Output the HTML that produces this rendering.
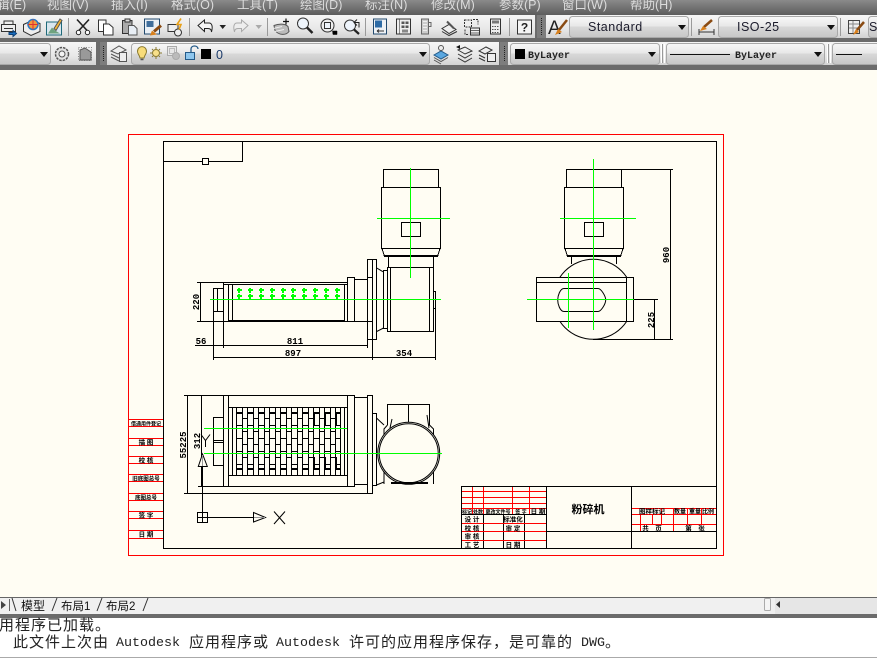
<!DOCTYPE html>
<html><head><meta charset="utf-8"><style>
html,body{margin:0;padding:0;background:#fffdf3;width:877px;height:670px;overflow:hidden}
svg{display:block;position:absolute;left:0;top:0}
.c{font-family:"Liberation Sans","Noto Sans CJK SC",sans-serif}
</style></head><body>
<svg width="877" height="670" viewBox="0 0 877 670" xmlns="http://www.w3.org/2000/svg" class="c">
<defs>
<linearGradient id="mb" x1="0" y1="0" x2="0" y2="1"><stop offset="0" stop-color="#8a8a8a"/><stop offset="1" stop-color="#5c5c5c"/></linearGradient>
<linearGradient id="tb" x1="0" y1="0" x2="0" y2="1"><stop offset="0" stop-color="#f6f6f6"/><stop offset=".6" stop-color="#e8e8e8"/><stop offset="1" stop-color="#d2d2d2"/></linearGradient>
<linearGradient id="cb" x1="0" y1="0" x2="0" y2="1"><stop offset="0" stop-color="#f8f8f8"/><stop offset=".45" stop-color="#e8e8e8"/><stop offset=".5" stop-color="#d8d8d8"/><stop offset="1" stop-color="#c6c6c6"/></linearGradient>
</defs>

<!-- canvas -->
<rect width="877" height="670" fill="#fffdf3"/>

<!-- drawing -->
<g shape-rendering="crispEdges" fill="none" stroke="#f00" stroke-width="1">
<rect x="128.5" y="134.5" width="595" height="421"/>
<path d="M129 419.5H163M129 426.5H163M129 438.5H163M129 445.5H163M129 456.5H163M129 463.5H163M129 474.5H163M129 481.5H163M129 493.5H163M129 500.5H163M129 511.5H163M129 518.5H163M129 530.5H163M129 538.5H163"/>
</g>
<g fill="#000" font-size="6.5" font-weight="700" text-anchor="middle">
<text x="146" y="425.5" font-size="5">借通用件登记</text><text x="146" y="444.5">描 图</text><text x="146" y="462.5">校 核</text><text x="146" y="480.5" font-size="5.5">旧底图总号</text><text x="146" y="499.5" font-size="5.5">底图总号</text><text x="146" y="517.5">签 字</text><text x="146" y="536.5">日 期</text>
</g>
<g shape-rendering="crispEdges" fill="none" stroke="#000" stroke-width="1">
<rect x="163.5" y="141.5" width="553" height="407"/>
<path d="M163 161.5H243M242.5 141V162"/>
<rect x="202.5" y="158.5" width="6" height="6" fill="#fffdf3"/>
<!-- title block black -->
<rect x="461.5" y="486.5" width="255" height="62"/>
<path d="M546.5 486V548M631.5 486V548M547 531.5H717M483.5 514V548M503.5 514V548M524.5 514V548M462 514.5H546"/>
</g>
<g shape-rendering="crispEdges" fill="none" stroke="#f00" stroke-width="1">
<path d="M462 491.5H546M462 497.5H546M462 503.5H546M462 508.5H546M462 523.5H546M462 531.5H546M462 540.5H546M472.5 487V514M483.5 487V514M512.5 487V514M529.5 487V514M632 508.5H716M632 514.5H716M632 524.5H716M640.5 514V531M652.5 514V525M661.5 509V525M673.5 509V531M687.5 509V525M701.5 509V525"/>
</g>
<g fill="#000" font-size="6.5" font-weight="700" text-anchor="middle">
<text x="467" y="513.5" font-size="5">标记</text><text x="478" y="513.5" font-size="5">处数</text><text x="498" y="513.5" font-size="5">更改文件号</text><text x="521" y="513.5" font-size="5">签 字</text><text x="538" y="513.5">日 期</text>
<text x="472" y="521.5">设 计</text><text x="513" y="521.5">标准化</text><text x="472" y="530.5">校 核</text><text x="513" y="530.5">审 定</text><text x="472" y="538.5">审 核</text><text x="472" y="547">工 艺</text><text x="513" y="547">日 期</text>
<text x="652" y="513.5">图样标记</text><text x="680" y="513.5" font-size="6">数量</text><text x="695" y="513.5" font-size="6">重量</text><text x="708" y="513.5" font-size="6">比例</text><text x="652" y="530.5">共　页</text><text x="695" y="530.5">第　张</text>
<text x="588" y="513" font-size="11">粉碎机</text>
</g>

<!-- Left (front) view -->
<g shape-rendering="crispEdges" fill="none" stroke="#000" stroke-width="1">
<rect x="383.5" y="169.5" width="55" height="18"/>
<rect x="381.5" y="187.5" width="59" height="61"/>
<rect x="401.5" y="222.5" width="19" height="14"/>
<path d="M382 248.5L384.5 256.5H437.5L440 248.5M384 255.5H438" />
<rect x="388.5" y="256.5" width="45" height="11"/>
<rect x="387.5" y="267.5" width="46" height="64"/>
<path d="M390.5 267V332M429.5 267V332"/>
<rect x="433.5" y="291.5" width="2" height="17"/>
<rect x="367.5" y="259.5" width="9" height="80"/>
<path d="M372.5 259V340M367 277.5H373M367 321.5H373"/>
<rect x="383.5" y="270.5" width="4" height="58"/>
<path d="M354.5 279.5H367M354.5 321.5H367"/>
<rect x="347.5" y="277.5" width="7" height="44"/>
<rect x="223.5" y="282.5" width="124" height="39"/>
<path d="M223 284.5H348M228.5 284V322M232.5 284V321M344.5 284V321"/>
<rect x="228" y="320" width="116" height="1.5" fill="#000" stroke="none"/>
<rect x="213.5" y="288.5" width="10" height="33"/>
<path d="M213 311.5H223M217.5 288V312"/>
<!-- dims -->
<path d="M200.5 282V322M197 282.5H224M197 321.5H224"/>
<path d="M195 345.5H367M213 357.5H436M213.5 288V360M223.5 321V348M367.5 339V348M372.5 339V360M435.5 300V360"/>
</g>
<g fill="none" stroke="#000" stroke-width="1">
<path d="M376.7 268L383.5 272M376.7 331.5L383.5 328"/>
</g>
<g fill="#000" font-family="Liberation Mono" font-size="9" font-weight="700" text-anchor="middle">
<text x="201" y="344">56</text><text x="295" y="344">811</text><text x="293" y="356">897</text><text x="404" y="356">354</text>
<text transform="translate(199,302) rotate(-90)">220</text>
<text transform="translate(669,255) rotate(-90)">960</text>
<text transform="translate(654,320) rotate(-90)">225</text>
<text transform="translate(186,445) rotate(-90)">55225</text>
<text transform="translate(200,441) rotate(-90)">312</text>
</g>
<g shape-rendering="crispEdges" stroke="#0f0" stroke-width="1" fill="none">
<path d="M410.5 168V278M377 218.5H450M210 299.5H441"/>
</g>
<g shape-rendering="crispEdges" stroke="#0f0" stroke-width="2" fill="none">
<path d="M237 290h5M239 288v5M248 290h5M250 288v5M259 290h5M261 288v5M270 290h5M272 288v5M281 290h5M283 288v5M291 290h5M293 288v5M302 290h5M304 288v5M313 290h5M315 288v5M324 290h5M326 288v5M335 290h5M337 288v5"/>
<path d="M237 296h5M239 294v5M248 296h5M250 294v5M259 296h5M261 294v5M270 296h5M272 294v5M281 296h5M283 294v5M291 296h5M293 294v5M302 296h5M304 294v5M313 296h5M315 294v5M324 296h5M326 294v5M335 296h5M337 294v5" />
</g>

<!-- Right (side) view -->
<g fill="none" stroke="#000" stroke-width="1">
<circle cx="593.3" cy="299.3" r="40"/>
<rect x="536.5" y="277.5" width="97" height="44" fill="#fffdf3" shape-rendering="crispEdges"/>
<path d="M626.5 277V322M537 282.5H626" shape-rendering="crispEdges"/>
<path d="M564 288.5H598C601 288.5 605.7 296 605.7 300C605.7 304 601 311.5 598 311.5H564C560 311.5 557.7 304 557.7 300C557.7 296 560 288.5 564 288.5Z"/>
<g shape-rendering="crispEdges">
<rect x="566.5" y="169.5" width="55" height="18"/>
<rect x="564.5" y="187.5" width="59" height="61"/>
<rect x="584.5" y="222.5" width="19" height="14"/>
<path d="M565 248.5L567.5 256.5H620.5L623 248.5M567 255.5H621M571.5 256V264M616.5 256V264"/>
<path d="M621 169.5H673M593 339.5H673M670.5 170V339M634 299.5H658M654.5 300V339"/>
</g>
</g>
<g shape-rendering="crispEdges" stroke="#0f0" stroke-width="1" fill="none">
<path d="M593.5 159V330M560 218.5H636M527 299.5H634M568.5 273V328"/>
</g>

<!-- Bottom (plan) view -->
<g shape-rendering="crispEdges" fill="none" stroke="#000" stroke-width="1">
<path d="M184 395.5H354M184 493.5H367M187.5 395V494M201.5 395V487M198 486.5H224"/>
<rect x="223.5" y="395.5" width="5" height="91"/>
<rect x="347.5" y="395.5" width="7" height="91"/>
<path d="M228 486.5H348M228 407.5H348M228 475.5H348"/>
<rect x="213.5" y="417.5" width="10" height="48"/>
<path d="M213 440.5H223M213 442.5H223"/>
<rect x="354.5" y="397.5" width="13" height="87"/>
<rect x="367.5" y="395.5" width="5" height="98"/>
<rect x="372.5" y="413.5" width="4" height="72"/>
<!-- cutters -->
<path d="M232.5 407V475M236.5 407V475M242.5 407V475M247.5 407V475M253.5 407V475M258.5 407V475M264.5 407V475M269.5 407V475M275.5 407V475M280.5 407V475M286.5 407V475M291.5 407V475M297.5 407V475M302.5 407V475M308.5 407V475M313.5 407V475M319.5 407V475M324.5 407V475M330.5 407V475M335.5 407V475M340.5 407V475M344.5 407V475"/>
<path stroke-dasharray="5.5 5.5" d="M242 418.5H341M242 431.5H341M242 444.5H341M242 457.5H341"/>
<path stroke-dasharray="5.5 5.5" d="M236.5 425.5H341M236.5 438.5H341M236.5 451.5H341M236.5 464.5H341"/>
<path stroke-dasharray="5.5 5.5" stroke-width="2" d="M236.5 413H341M236.5 469H341"/>
<path stroke-width="2" d="M314 413V425M325 413V425M336 413V425M314 457V469M325 457V469M336 457V469"/>
</g>
<g fill="none" stroke="#000" stroke-width="1">
<path d="M376.5 418L384 425M376.5 485L384 482M387.5 425V404.5H429.5V425L433.5 429V484M408.5 404V422M387.5 425L384 429V484M392 419L390 428M427 415L429 428"/>
<circle cx="408.7" cy="453.3" r="31" fill="#fffdf3"/>
<circle cx="408.7" cy="453.3" r="29.5"/>
</g>
<rect x="391" y="482" width="37" height="2" fill="#000"/>
<g shape-rendering="crispEdges" stroke="#0f0" stroke-width="1" fill="none">
<path d="M204 428.5H347M204 453.5H442"/>
</g>
<!-- UCS -->
<g fill="none" stroke="#000" stroke-width="1">
<path d="M202.5 466V513M208 517.5H253" shape-rendering="crispEdges"/>
<rect x="197.5" y="512.5" width="10" height="10" shape-rendering="crispEdges"/>
<path d="M202.5 513V522M198 517.5H207" shape-rendering="crispEdges"/>
<path d="M202.5 454L198.3 466.5H207.3Z" fill="#fffdf3"/>
<path d="M202.5 455V466" stroke="#999"/>
<path d="M253.5 512.5L265.5 517.5L253.5 522Z" fill="#fffdf3"/>
<path d="M254 517.5H265" stroke="#999"/>
<path d="M274 511.5L285 524M285 511.5L274 524M201 434.5L205.5 440.5L210 434.5M205.5 440.5V447"/>
</g>

<!-- menu bar -->
<rect x="0" y="0" width="877" height="15" fill="url(#mb)"/>
<g fill="#dcdcdc" font-size="12.5">
<text x="-3" y="9">辑(E)</text><text x="47" y="9">视图(V)</text><text x="111" y="9">插入(I)</text><text x="171" y="9">格式(O)</text><text x="237" y="9">工具(T)</text><text x="300" y="9">绘图(D)</text><text x="365" y="9">标注(N)</text><text x="431" y="9">修改(M)</text><text x="499" y="9">参数(P)</text><text x="562" y="9">窗口(W)</text><text x="630" y="9">帮助(H)</text>
</g>

<!-- toolbar backgrounds -->
<rect x="0" y="15" width="877" height="55" fill="#6b6b6b"/>
<rect x="0" y="15" width="877" height="23" fill="url(#tb)"/>
<rect x="0" y="42" width="96" height="23" fill="url(#tb)"/>
<rect x="107" y="42" width="392" height="23" fill="url(#tb)"/>
<rect x="508" y="42" width="369" height="23" fill="url(#tb)"/>
<rect x="535" y="15" width="2" height="23" fill="#6b6b6b"/>
<rect x="537" y="15" width="9" height="23" fill="#7d7d7d"/>
<rect x="100" y="42" width="7" height="23" fill="#7d7d7d"/>
<rect x="500" y="42" width="8" height="23" fill="#7d7d7d"/>
<g fill="none" stroke="#222" stroke-dasharray="1 1" shape-rendering="crispEdges">
<path d="M541.5 18V36M103.5 46V62M504.5 46V62"/>
</g>
<!-- separators -->
<g stroke="#9a9a9a" shape-rendering="crispEdges"><path d="M68.5 18V36M189.5 18V36M267.5 18V36M365.5 18V36M509.5 18V36M691.5 18V36M840.5 18V36"/></g>
<g stroke="#fff" shape-rendering="crispEdges"><path d="M661.5 44V63M664.5 44V63M827.5 44V63M830.5 44V63"/></g>
<g stroke="#999" shape-rendering="crispEdges"><path d="M662.5 44V63M828.5 44V63"/></g>

<!-- row 1 icons -->
<g fill="none" stroke="#333" stroke-width="1" transform="translate(0,-1.5)">
<path d="M4 22.5H13V26H15.5V33H1.5V26H4Z" fill="#eee"/><path d="M4 26H13M4 30H13"/><path d="M9 34H13V32L16.5 35L13 38V36H9Z" fill="#1b6fc0" stroke="#0c3f75"/>
<path d="M23.5 26L32 22L40 25V33L31 37L23.5 33Z" fill="#eee"/><circle cx="33" cy="26" r="5" fill="#f29a3c" stroke="#2b79c5" stroke-width="1.5"/><path d="M33 21V31M28 26H38" stroke="#d33"/>
<rect x="46.5" y="23.5" width="15" height="13" fill="#d8e6ee" stroke="#1f6a7a"/><path d="M48 35L52 29L55 32L60 35Z" fill="#6fa37f" stroke="none"/><path d="M54 30L60 20.5L62 22L56 32Z" fill="#f3b638" stroke="#555"/>
<path d="M77 21L88 33M89 21L78 33" stroke="#222" stroke-width="1.6"/><circle cx="78.5" cy="34" r="2.2" fill="#fff" stroke="#222"/><circle cx="87.5" cy="34" r="2.2" fill="#fff" stroke="#222"/>
<path d="M98.5 21.5H106V33H98.5Z" fill="#fff"/><path d="M103.5 25.5H109L113 29V36.5H103.5Z" fill="#fff"/>
<path d="M122.5 22H132V35H122.5Z" fill="#aaa"/><rect x="125" y="20.5" width="5" height="3" fill="#ddd"/><path d="M128.5 27H134L137 30V36.5H128.5Z" fill="#e8eef5" stroke="#555"/>
<rect x="144.5" y="20.5" width="15" height="15" fill="#eaf0f6" stroke="#234a6e"/><rect x="146.5" y="22.5" width="7" height="6" fill="#3f6e9c" stroke="none"/><path d="M161 27L154 33" stroke="#8a4b13" stroke-width="3"/><path d="M152 32L157 36L150 37Z" fill="#d9801c" stroke="none"/>
<path d="M168 26H178V33H168Z" fill="#eee"/><circle cx="178" cy="34" r="3.5" fill="#eee"/><path d="M181 20L177 26H181L179 31" stroke="#e8a018" stroke-width="1.6"/>
<path d="M209 24.5H204.5V21.5L198 27L204.5 33V30H208C210.5 30 211.5 31 211.5 33.5C213 28 212 24.5 209 24.5Z" fill="#f6f6f6" stroke="#222"/>
<path d="M237 24.5H241.5V21.5L248 27L241.5 33V30H238C235.5 30 234.5 31 234.5 33.5C233 28 234 24.5 237 24.5Z" fill="#eee" stroke="#aaa"/>
<path d="M274 27C279 25 285 25 288 28L289 33C286 37 279 37 275 32Z" fill="#bbb" stroke="#555"/><path d="M273.5 30L282 28M275 33L284 31" stroke="#eee"/><path d="M286 20V26M283 23H289" stroke="#111" stroke-width="1.2"/>
<circle cx="303" cy="25" r="5.5" fill="#eef4fb" stroke="#333"/><path d="M307 29L312.5 34.5" stroke="#222" stroke-width="2.4"/>
<circle cx="327.5" cy="27" r="6.5" fill="#eee"/><rect x="324.5" y="24" width="6" height="6" fill="#eef4fb"/><path d="M332.5 32.5H337V36H333Z" fill="#000" stroke="#000" stroke-width=".5"/>
<circle cx="350" cy="27" r="5.5" fill="#eef4fb"/><path d="M354 31L359 35.5" stroke="#222" stroke-width="2.2"/><path d="M357 21L354 24L357 27M354 24H359V29" stroke="#222"/>
<rect x="373.5" y="20.5" width="13" height="15" fill="#eef2f6" stroke="#234a6e"/><rect x="375" y="22" width="7" height="7" fill="#2d6ba6" stroke="none"/><path d="M377 32.5H384M377 32.5L379 31M377 32.5L379 34" stroke="#333"/>
<rect x="396.5" y="20.5" width="14" height="15" fill="#eee"/><path d="M399.5 21V35" stroke="#888"/><rect x="401.5" y="23" width="3" height="2.5" fill="#555" stroke="none"/><rect x="405.5" y="23" width="3" height="2.5" fill="#555" stroke="none"/><rect x="401.5" y="27" width="3" height="2.5" fill="#555" stroke="none"/><rect x="405.5" y="27" width="3" height="2.5" fill="#555" stroke="none"/><rect x="402" y="31" width="6" height="3" fill="#888" stroke="none"/>
<rect x="421.5" y="20.5" width="7" height="15" fill="#ccc" stroke="#666"/><path d="M428 24H431V28H428" stroke="#666"/><path d="M423 23H427M423 26H427M423 29H427M423 32H427" stroke="#eee"/>
<path d="M442 30L449 26L456 31L449 35Z" fill="#eee"/><path d="M442 33L449 37L457 33"/><path d="M447 23L454 30" stroke="#555" stroke-width="2"/>
<rect x="464.5" y="21.5" width="7" height="7" fill="#eee" stroke-dasharray="2 1"/><path d="M473 21H478V26M465 31V36H468" stroke-dasharray="2 1"/><rect x="470.5" y="29.5" width="9" height="7" fill="#eee"/><path d="M471 32H479M471 34.5H479" stroke="#666"/>
<rect x="490.5" y="20.5" width="10" height="15" fill="#eee"/><rect x="492" y="22" width="7" height="3" fill="#777" stroke="none"/><path d="M492 28H499M492 31H499M492 34H499" stroke="#555" stroke-dasharray="1.5 1"/>
<rect x="517.5" y="21.5" width="14" height="14" fill="#f4f4f4" stroke="#333"/>
</g>
<text x="524.5" y="31.5" text-anchor="middle" font-size="12" font-weight="700" fill="#222">?</text>
<path d="M219.5 25H226L222.7 29Z" fill="#222"/>
<path d="M255.5 25H262L258.7 29Z" fill="#aaa"/>
<!-- A icon, dim icon, table icon -->
<text x="548" y="34" font-size="19" fill="#222">A</text>
<path d="M567 20L559 30" stroke="#8a4b13" stroke-width="2.5"/><path d="M558 29L562 32L555 35Z" fill="#d9801c"/>
<g fill="none" stroke="#333"><path d="M699 29V35M714 29V35M699 32H714"/></g>
<path d="M712 20L704 27" stroke="#8a4b13" stroke-width="2.5"/><path d="M703 26L707 29L700 31Z" fill="#d9801c"/>
<rect x="848.5" y="20.5" width="11" height="13" fill="#eee" stroke="#444"/><path d="M849 24H859M849 28H859M853 21V33" stroke="#888"/>
<path d="M864 22L857 30" stroke="#8a4b13" stroke-width="2.5"/><path d="M856 29L859 32L853 35Z" fill="#d9801c"/>

<!-- combos row 1 -->
<g stroke="#a8a8a8" fill="url(#cb)">
<rect x="569.5" y="16.5" width="119" height="21" rx="3"/>
<rect x="718.5" y="16.5" width="119" height="21" rx="3"/>
<rect x="868.5" y="16.5" width="20" height="21" rx="3"/>
</g>
<text x="588" y="31" font-size="12.5" fill="#1a1a2a" letter-spacing=".5">Standard</text>
<text x="737" y="31" font-size="12.5" fill="#1a1a2a" letter-spacing=".5">ISO-25</text>
<text x="869" y="31" font-size="12.5" fill="#1a1a2a">S</text>
<path d="M678 25H686L682 30ZM827 25H835L831 30Z" fill="#111"/>

<!-- combos row 2 -->
<g stroke="#a8a8a8" fill="url(#cb)">
<rect x="-5.5" y="43.5" width="56" height="21" rx="3"/>
<rect x="131.5" y="43.5" width="298" height="21" rx="3"/>
<rect x="510.5" y="43.5" width="149" height="21" rx="3"/>
<rect x="666.5" y="43.5" width="158" height="21" rx="3"/>
<rect x="832.5" y="43.5" width="60" height="21" rx="3"/>
</g>
<path d="M40 52H48L44 57ZM419 52H427L423 57ZM648 52H656L652 57ZM814 52H822L818 57Z" fill="#111"/>
<g fill="none" stroke="#555">
<circle cx="62" cy="54" r="6.5" fill="#e2e2e2" stroke-width="1.5" stroke-dasharray="2.5 1"/><circle cx="62" cy="54" r="3" fill="#f4f4f4"/>
<rect x="78.5" y="47.5" width="13" height="13" stroke="#888" stroke-dasharray="1 1.5"/><path d="M80 60V50L85 48L91 52V60Z" fill="#999"/>
<path d="M111 51L119 46L126 50L118 54Z" fill="#eee"/><path d="M111 54L119 58M111 57L119 61"/><rect x="119.5" y="52.5" width="7" height="9" fill="#eee"/>
<path d="M137.5 51.5C137.5 45 146.5 45 146.5 51.5C146.5 54 144.5 55 144 58H140C139.5 55 137.5 54 137.5 51.5Z" fill="#f8dc7a" stroke="#8a7a30"/><path d="M140.5 59.5H143.5" stroke-width="1.5"/>
<circle cx="156" cy="53" r="3.5" fill="#f8e08a" stroke="#8a7a30"/><path d="M156 47V49M156 57V59M150 53H152M160 53H162M152 49L153 50M159 56L160 57M160 49L159 50M153 56L152 57" stroke="#8a7a30"/>
<rect x="167.5" y="46.5" width="9" height="9" stroke="#aaa" fill="#e8e8e8"/><rect x="169.5" y="48.5" width="5" height="5" stroke="#bbb"/><circle cx="176" cy="56" r="3.5" fill="#bbb" stroke="#aaa"/>
<rect x="185.5" y="52.5" width="9" height="7" fill="#8fc7ee" stroke="#245a88"/><path d="M191 52V49C191 45 198 45 198 49" stroke="#245a88" stroke-width="1.3"/>
<path d="M434 55L441 51L448 55L441 59Z" fill="#5aa7e0" stroke="#245a88"/><path d="M434 57.5L441 61.5L448 57.5M434 60L441 64"/><circle cx="441" cy="48" r="2.5" fill="#eee"/>
<path d="M458 50L465 47L472 51L465 54ZM458 54L465 58L472 54M458 58L465 62L472 58" stroke="#333"/><path d="M456 47L460 45V49Z" fill="#111" stroke="none"/>
<path d="M479 51L486 47L492 50L485 54ZM479 55L485 58M479 58L485 61" stroke="#333"/><rect x="487.5" y="53.5" width="8" height="8" fill="#eee" stroke="#333"/>
</g>
<rect x="201" y="49" width="10" height="10" fill="#000"/>
<text x="216" y="59" font-size="12.5" fill="#1a3a6a">0</text>
<rect x="515" y="49" width="10" height="10" fill="#000"/>
<g font-family="Liberation Mono" font-size="10" font-weight="700" fill="#222">
<text x="528" y="58">ByLayer</text><text x="735" y="58">ByLayer</text>
</g>
<path d="M670 54.5H730M836 54.5H862" stroke="#111" shape-rendering="crispEdges"/>

<!-- bottom -->
<rect x="0" y="597" width="877" height="17" fill="#f0f0f0"/>
<path d="M0 597.5H877" stroke="#666" shape-rendering="crispEdges"/>
<rect x="0" y="614" width="877" height="4" fill="#6b6b6b"/>
<rect x="0" y="618" width="877" height="52" fill="#fff"/>
<path d="M0 657.5H877" stroke="#aaa" shape-rendering="crispEdges"/>
<rect x="775" y="598" width="102" height="16" fill="#e6e6e6"/>
<rect x="764.5" y="598.5" width="6" height="12" rx="1" fill="#f4f4f4" stroke="#aaa"/>
<path d="M776 604.5L780 601V608Z" fill="#333"/>
<path d="M1 601L6 605L1 609Z" fill="#444"/><path d="M9.5 599V611" stroke="#666"/>
<path d="M12 598L16 611M52 611L57 598M97 611L102 598M143 611L148 598" fill="none" stroke="#333"/>
<g fill="#111">
<text x="21" y="610" font-size="12">模型</text>
<text x="61" y="610" font-size="11.5">布局1</text>
<text x="106" y="610" font-size="11.5">布局2</text>
</g>
<g fill="#222" font-size="15">
<text x="-1" y="630" letter-spacing="1">用程序已加载。</text>
<text x="13" y="647" letter-spacing="1">此文件上次由</text>
<text x="189" y="647" letter-spacing="1">应用程序或</text>
<text x="349" y="647" letter-spacing="1">许可的应用程序保存，是可靠的</text>
<text x="605" y="647">。</text>
</g>
<g fill="#222" font-family="Liberation Mono" font-size="13.33">
<text x="116" y="646">Autodesk</text><text x="276" y="646">Autodesk</text><text x="581" y="646">DWG</text>
</g>
</svg>
</body></html>
